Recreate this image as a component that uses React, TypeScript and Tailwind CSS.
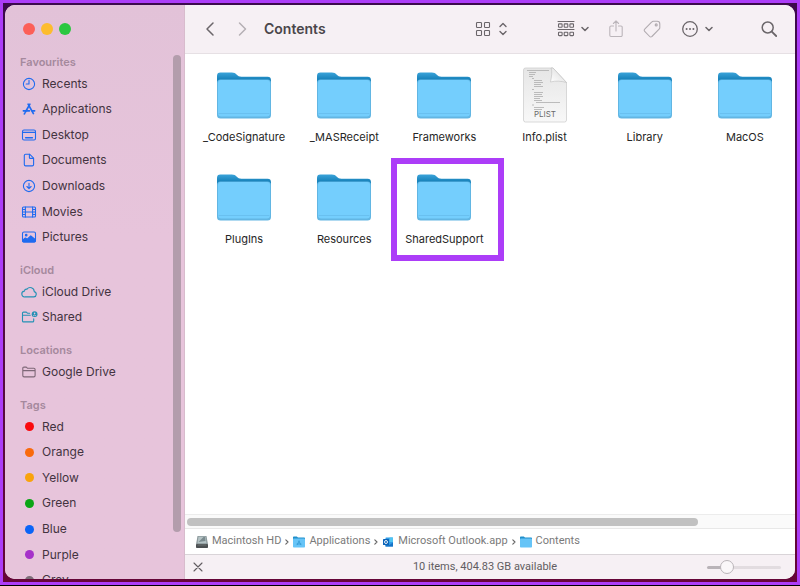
import React, { useState } from "react";
import type { ReactNode } from "react";

const Icon = ({
  children,
  className = "h-4 w-[18px]",
  box = "0 0 18 16",
}: {
  children: ReactNode;
  className?: string;
  box?: string;
}) => (
  <svg
    viewBox={box}
    className={`shrink-0 ${className}`}
    fill="none"
    stroke="currentColor"
    strokeWidth="1.1"
    strokeLinecap="round"
    strokeLinejoin="round"
    aria-hidden="true"
  >
    {children}
  </svg>
);

const favourites = [
  {
    name: "Recents",
    icon: (
      <>
        <circle cx="9" cy="8" r="5.6" />
        <path d="M9 4.4V8H6.2" />
      </>
    ),
  },
  {
    name: "Applications",
    icon: (
      <>
        <path d="M9.9 3.2 5.4 11M8.1 3.2l5.3 9.4" strokeWidth="1.7" />
        <path d="M3.4 9.8h6M12.2 9.8h2.4M4.8 12.2l-.4.7" strokeWidth="1.7" />
      </>
    ),
  },
  {
    name: "Desktop",
    icon: (
      <>
        <rect x="2.5" y="3" width="13" height="10" rx="1.5" />
        <path d="M2.8 5.4h12.4" />
        <path d="M5.6 10.8h6.8" strokeWidth="1.5" />
      </>
    ),
  },
  {
    name: "Documents",
    icon: (
      <>
        <path d="M5.6 2.2h4l4 4v6.4a1.3 1.3 0 0 1-1.3 1.3H5.6a1.3 1.3 0 0 1-1.3-1.3V3.5a1.3 1.3 0 0 1 1.3-1.3Z" />
        <path d="M9.4 2.4v3a1 1 0 0 0 1 1h3" />
      </>
    ),
  },
  {
    name: "Downloads",
    icon: (
      <>
        <circle cx="9" cy="8" r="5.6" />
        <path d="M9 5.2v5.2M6.9 8.5 9 10.6l2.1-2.1" />
      </>
    ),
  },
  {
    name: "Movies",
    icon: (
      <>
        <rect x="2.5" y="3" width="13" height="10" rx="1" />
        <path d="M5.4 3v10M12.6 3v10M5.4 8h7.2M2.6 5.5h2.8M2.6 8h2.8M2.6 10.5h2.8M12.6 5.5h2.8M12.6 8h2.8M12.6 10.5h2.8" />
      </>
    ),
  },
  {
    name: "Pictures",
    icon: (
      <>
        <rect x="2.5" y="3" width="13" height="10" rx="1.5" />
        <path
          d="M2.6 11.2 5.4 9l1.8 1.2 3.6-3.4 4.6 3.8v1.2a1.2 1.2 0 0 1-1.2 1.2H3.8a1.2 1.2 0 0 1-1.2-1.2Z"
          fill="currentColor"
        />
        <circle cx="6.2" cy="6.2" r="0.8" fill="currentColor" />
      </>
    ),
  },
];

const icloud = [
  {
    name: "iCloud Drive",
    icon: (
      <path d="M5 12.9a2.9 2.9 0 0 1-.6-5.8 2.3 2.3 0 0 1 2.6-1.9 4 4 0 0 1 7.2 2.4 2.7 2.7 0 0 1-.3 5.3Z" />
    ),
  },
  {
    name: "Shared",
    icon: (
      <>
        <path d="M9.6 4.2H7.4L6.3 3.1H3.5a1 1 0 0 0-1 1v7.8a1 1 0 0 0 1 1h9.2a1 1 0 0 0 1-1v-2M2.6 6.3h7.6" />
        <circle cx="14.6" cy="5.2" r="2.9" fill="currentColor" stroke="none" />
        <circle cx="14.6" cy="4.4" r="0.8" fill="#e6c4db" stroke="none" />
        <path d="M13.2 6.8q1.4-1.6 2.8 0" stroke="#e6c4db" strokeWidth="0.8" />
      </>
    ),
  },
];

const locations = [
  {
    name: "Google Drive",
    icon: (
      <path d="M2.8 11.6V4.2a1.1 1.1 0 0 1 1.1-1.1h2.4l1.3 1.2h6.2a1.3 1.3 0 0 1 1.3 1.3v6a1.3 1.3 0 0 1-1.3 1.3H4.1a1.3 1.3 0 0 1-1.3-1.3ZM2.8 6.6h12.3" />
    ),
  },
];

const tags = [
  { name: "Red", color: "bg-[#fa0a0e]" },
  { name: "Orange", color: "bg-[#f96a0c]" },
  { name: "Yellow", color: "bg-[#f9a30c]" },
  { name: "Green", color: "bg-[#0ba516]" },
  { name: "Blue", color: "bg-[#0a64f7]" },
  { name: "Purple", color: "bg-[#a631c9]" },
  { name: "Grey", color: "bg-[#7c6d78]" },
];

const files = [
  "_CodeSignature",
  "_MASReceipt",
  "Frameworks",
  "Info.plist",
  "Library",
  "MacOS",
  "PlugIns",
  "Resources",
  "SharedSupport",
];

const Folder = () => (
  <svg viewBox="0 0 56 56" className="size-14" aria-hidden="true">
    <defs>
      <linearGradient id="folder-back" x1="0" y1="0" x2="0" y2="1">
        <stop offset="0" stopColor="#3aa3d9" />
        <stop offset="0.25" stopColor="#1b85bd" />
      </linearGradient>
    </defs>
    <path
      d="M1 9a3.4 3.4 0 0 1 3.4-3.4h11.4c2.4 0 3.6.9 5 2.2 1.2 1.1 2.4 2 4.6 2h26.2A3.4 3.4 0 0 1 55 13.2V30H1Z"
      fill="url(#folder-back)"
    />
    <rect x="1" y="12.5" width="54" height="39" rx="3.5" fill="#62b6e3" />
    <rect x="2" y="13" width="52" height="36.5" rx="3" fill="#74cefd" />
    <path d="M2.5 46.5h51" stroke="#66bdec" strokeWidth="0.8" />
  </svg>
);

const PlistFile = () => (
  <svg viewBox="0 0 56 56" className="size-14" aria-hidden="true">
    <defs>
      <linearGradient id="page" x1="0" y1="0" x2="0" y2="1">
        <stop offset="0" stopColor="#e6e6e6" />
        <stop offset="1" stopColor="#f8f8f8" />
      </linearGradient>
      <linearGradient id="curl" x1="0" y1="1" x2="1" y2="0">
        <stop offset="0" stopColor="#ffffff" />
        <stop offset="1" stopColor="#d8d8d8" />
      </linearGradient>
    </defs>
    <path
      d="M8.5 1H36L49.5 15.5V53a2 2 0 0 1-2 2h-39a2 2 0 0 1-2-2V3a2 2 0 0 1 2-2Z"
      fill="url(#page)"
      stroke="#cfcfcf"
      strokeWidth="0.8"
    />
    <path
      d="M10 3.5h22M12 5.5h7M12 7.5h6M12 9.5h4M15 11.5h2M17 13.5h8M17 15.5h9M17 17.5h7M17 19.5h9M15 22.5h2M17 25.5h9M17 27.5h8M17 29.5h9M17 31.5h6M17 33.5h8M19 35.5h24M15 38h2M17 40.5h10M17 42.5h8"
      stroke="#adadad"
      strokeWidth="0.8"
    />
    <path
      d="M34 1c1.5 3 .5 9-.5 14 5-1.5 11-1 16 .5L36 1Z"
      fill="url(#curl)"
      stroke="#bdbdbd"
      strokeWidth="0.6"
    />
    <text
      x="28"
      y="50"
      textAnchor="middle"
      fontSize="8"
      fill="#6a6a6a"
      className="font-['Inter',sans-serif]"
    >
      PLIST
    </text>
  </svg>
);

const SmallFolder = ({ apps = false }: { apps?: boolean }) => (
  <svg viewBox="0 0 12 12" className="size-3 shrink-0" aria-hidden="true">
    <path d="M0 1.3Q0 .5.8.5h3L5 1.5h6.2q.8 0 .8.8V8H0Z" fill="#1f8fcb" />
    <rect y="2.5" width="12" height="9" rx="0.8" fill="#66c4f7" />
    {apps && (
      <path
        d="m6.3 4.7-2.3 4.4M5.7 4.7 8 9.1M3.7 8h4.6"
        stroke="#2b93cf"
        strokeWidth="0.7"
      />
    )}
  </svg>
);

const Drive = () => (
  <svg viewBox="0 0 12 12" className="size-3 shrink-0" aria-hidden="true">
    <path d="M1.5 0h9L12 8.5H0Z" fill="#8d9a9d" />
    <path d="M2.5.8h7l1 6.5h-9Z" fill="#b5c3c5" />
    <path d="m2.5 6 5-5h1.5l.5 4Z" fill="#7b8b8f" />
    <rect y="8" width="12" height="4" rx="0.8" fill="#4c5052" />
    <path d="M1.5 9h9" stroke="#83898b" strokeWidth="0.6" />
  </svg>
);

const Outlook = () => (
  <svg viewBox="0 0 12 12" className="size-3 shrink-0" aria-hidden="true">
    <rect x="3.5" y="1.5" width="7.5" height="9" rx="0.6" fill="#2f9be6" />
    <path d="M7.5 1.5H11V6H7.5Z" fill="#50c4f2" />
    <path d="M3.5 7 7.5 9 11 6.5v4H3.5Z" fill="#1673c6" />
    <rect x="1" y="3" width="6" height="6" rx="0.6" fill="#0b63b8" />
    <circle cx="4" cy="6" r="1.5" fill="none" stroke="#fff" strokeWidth="0.9" />
  </svg>
);

const path = [
  { name: "Macintosh HD", icon: <Drive /> },
  { name: "Applications", icon: <SmallFolder apps /> },
  { name: "Microsoft Outlook.app", icon: <Outlook /> },
  { name: "Contents", icon: <SmallFolder /> },
];

const Section = ({
  title,
  children,
  className = "",
}: {
  title: string;
  children: ReactNode;
  className?: string;
}) => (
  <section>
    <h2 className="text-[11px] leading-[18px] font-semibold text-[#a5899d]">
      {title}
    </h2>
    <ul className={`grid auto-rows-fr ${className}`}>{children}</ul>
  </section>
);

const Row = ({ name, children }: { name: string; children: ReactNode }) => (
  <li className="flex">
    <a href="#" className="flex items-center gap-1 text-xs text-[#43333f]">
      <span className="flex w-[18px] justify-center">{children}</span>
      {name}
    </a>
  </li>
);

const Down = () => (
  <Icon box="0 0 8 8" className="size-2">
    <path d="m1 2.5 3 3 3-3" strokeWidth="1.5" />
  </Icon>
);

const App = () => {
  const [zoom, setZoom] = useState(22);

  return (
    <div className="h-screen bg-black pb-px font-['Inter',sans-serif]">
      <div className="h-full border-[3px] border-[#ac3df8] bg-linear-to-b from-[#3c0a4d] to-[#650538] p-0.5 pb-[3px]">
        <div className="flex h-full overflow-hidden rounded-[10px] bg-white">
          {/* Sidebar */}
          <aside className="flex w-[180px] shrink-0 flex-col border-r border-[#d8bccd] bg-linear-to-b from-[#e2c2d8] to-[#e7c4db] to-40%">
            <div className="flex h-12 shrink-0 items-center gap-1.5 pl-[18px]">
              <button aria-label="Close" className="size-3 rounded-full bg-[#fc5f58]" />
              <button aria-label="Minimise" className="size-3 rounded-full bg-[#fdbc2e]" />
              <button aria-label="Zoom" className="size-3 rounded-full bg-[#2bc740]" />
            </div>
            <div className="flex min-h-0 flex-1">
              <nav className="flex flex-1 flex-col gap-[11px] overflow-hidden pl-[15px]">
                <Section title="Favourites" className="h-[179px]">
                  {favourites.map((item) => (
                    <Row key={item.name} name={item.name}>
                      <Icon className="h-4 w-[18px] text-[#1f6bf0]">{item.icon}</Icon>
                    </Row>
                  ))}
                </Section>
                <Section title="iCloud" className="h-[51px]">
                  {icloud.map((item) => (
                    <Row key={item.name} name={item.name}>
                      <Icon className="h-4 w-[18px] text-[#2391b5]">{item.icon}</Icon>
                    </Row>
                  ))}
                </Section>
                <Section title="Locations" className="h-[26px]">
                  {locations.map((item) => (
                    <Row key={item.name} name={item.name}>
                      <Icon className="h-4 w-[18px] text-[#7d6777]">{item.icon}</Icon>
                    </Row>
                  ))}
                </Section>
                <Section title="Tags" className="h-[179px]">
                  {tags.map((tag) => (
                    <Row key={tag.name} name={tag.name}>
                      <span className={`size-[9px] rounded-full ${tag.color}`} />
                    </Row>
                  ))}
                </Section>
              </nav>
              <div className="mr-[3px] w-2 pt-0.5">
                <div className="h-[91%] rounded-full bg-[#b39dac]" />
              </div>
            </div>
          </aside>

          <main className="flex min-w-0 flex-1 flex-col">
            {/* Toolbar */}
            <header className="flex h-[49px] shrink-0 items-center border-b border-[#e6e0e4] bg-[#f6f0f4] pr-4 pl-[15px] text-[#6b666a]">
              <div className="flex items-center gap-3">
                <button aria-label="Back">
                  <Icon box="0 0 20 20" className="size-5">
                    <path d="m13 4-6 6 6 6" strokeWidth="1.5" />
                  </Icon>
                </button>
                <button aria-label="Forward" className="text-[#b5afb4]">
                  <Icon box="0 0 20 20" className="size-5">
                    <path d="m7.5 4 6 6-6 6" strokeWidth="1.5" />
                  </Icon>
                </button>
                <h1 className="text-sm font-semibold text-[#4a464a]">Contents</h1>
              </div>
              <div className="ml-auto flex items-center gap-5">
                <button aria-label="View as icons" className="mr-[30px] flex items-center gap-2">
                  <Icon box="0 0 16 16" className="size-4">
                    <rect x="1.5" y="1.5" width="5" height="5" rx="0.8" />
                    <rect x="9.5" y="1.5" width="5" height="5" rx="0.8" />
                    <rect x="1.5" y="9.5" width="5" height="5" rx="0.8" />
                    <rect x="9.5" y="9.5" width="5" height="5" rx="0.8" />
                  </Icon>
                  <Icon box="0 0 8 14" className="h-3.5 w-2">
                    <path d="m1 4.5 3-3 3 3M1 9.5l3 3 3-3" strokeWidth="1.4" />
                  </Icon>
                </button>
                <button aria-label="Group" className="flex items-center gap-1.5">
                  <Icon box="0 0 18 18" className="size-[18px]">
                    <path d="M1 1.5h16M1 9.5h16" />
                    <rect x="1.5" y="3.9" width="3.6" height="3.4" rx="0.6" />
                    <rect x="7.2" y="3.9" width="3.6" height="3.4" rx="0.6" />
                    <rect x="12.9" y="3.9" width="3.6" height="3.4" rx="0.6" />
                    <rect x="1.5" y="12.2" width="3.6" height="3.4" rx="0.6" />
                    <rect x="7.2" y="12.2" width="3.6" height="3.4" rx="0.6" />
                    <rect x="12.9" y="12.2" width="3.6" height="3.4" rx="0.6" />
                  </Icon>
                  <Down />
                </button>
                <button aria-label="Share" className="text-[#bbb5ba]">
                  <Icon box="0 0 14 18" className="h-[18px] w-3.5">
                    <path d="M4.5 6H2a1.2 1.2 0 0 0-1.2 1.2v8.1A1.2 1.2 0 0 0 2 16.5h10a1.2 1.2 0 0 0 1.2-1.2V7.2A1.2 1.2 0 0 0 12 6H9.5M7 11V1M4.4 3.5 7 .9l2.6 2.6" />
                  </Icon>
                </button>
                <button aria-label="Edit tags" className="text-[#b0aaaf]">
                  <Icon box="0 0 18 18" className="size-[18px]">
                    <path d="M10.4 1.3h3.8a2.6 2.6 0 0 1 2.6 2.6v3.5a2.5 2.5 0 0 1-.7 1.8l-7.2 7.3a1.5 1.5 0 0 1-2.2 0l-5-5.2a1.5 1.5 0 0 1 0-2.2l6.9-7a2.5 2.5 0 0 1 1.8-.8Z" />
                    <circle cx="13.2" cy="4.9" r="1" />
                  </Icon>
                </button>
                <button aria-label="More actions" className="flex items-center gap-1.5">
                  <Icon box="0 0 18 18" className="size-[18px]">
                    <circle cx="9" cy="9" r="7.3" strokeWidth="1.3" />
                    <path d="M5.6 9h.01M9 9h.01M12.4 9h.01" strokeWidth="2" />
                  </Icon>
                  <Down />
                </button>
                <button aria-label="Search" className="ml-[26px]">
                  <Icon box="0 0 20 20" className="size-5">
                    <circle cx="8.7" cy="8.5" r="5.5" strokeWidth="1.5" />
                    <path d="m12.8 12.6 4.4 4.4" strokeWidth="1.8" />
                  </Icon>
                </button>
              </div>
            </header>

            {/* Files */}
            <div className="grid min-h-0 flex-1 auto-rows-[102px] grid-cols-6 overflow-hidden pt-[13px] pl-[9px]">
              {files.map((file) => (
                <div key={file} className="relative">
                  {file === "SharedSupport" && (
                    <div className="absolute -top-[11px] -left-[3px] h-[103px] w-[113px] border-[6px] border-[#ac3df8]" />
                  )}
                  <button className="flex w-full flex-col items-center gap-1.5 text-[11px] leading-4 text-[#262626]">
                    {file.endsWith(".plist") ? <PlistFile /> : <Folder />}
                    {file}
                  </button>
                </div>
              ))}
            </div>

            {/* Horizontal scrollbar */}
            <div className="flex h-[14px] shrink-0 items-center border-t border-[#ececec] bg-[#fafafa] pl-0.5">
              <div className="h-2 w-[84%] rounded-full bg-[#c1c1c1]" />
            </div>

            {/* Path bar */}
            <nav className="flex h-[26px] shrink-0 items-center border-t border-[#e8e8e8] pl-[11px] font-['Roboto',sans-serif] text-[11px] text-[#7a7a7a]">
              {path.map((part, i) => (
                <React.Fragment key={part.name}>
                  {i > 0 && (
                    <Icon box="0 0 4 8" className="mx-1 h-2 w-1 text-[#666666]">
                      <path d="m.8 1.8 2.2 2.2-2.2 2.2" />
                    </Icon>
                  )}
                  <a href="#" className="flex items-center gap-1">
                    {part.icon}
                    {part.name}
                  </a>
                </React.Fragment>
              ))}
            </nav>

            {/* Status bar */}
            <footer className="flex h-[25px] shrink-0 items-center border-t border-[#d9d4d8] bg-[#f6f0f4] pr-3.5 pl-2 font-['Roboto',sans-serif] text-[11px] text-[#625d61]">
              <button aria-label="Cancel">
                <Icon box="0 0 10 10" className="size-2.5">
                  <path d="m1 1 8 8M9 1 1 9" />
                </Icon>
              </button>
              <p className="flex-1 pl-[60px] text-center">10 items, 404.83 GB available</p>
              <input
                type="range"
                aria-label="Icon size"
                value={zoom}
                onChange={(e) => setZoom(Number(e.target.value))}
                className="h-[3px] w-[74px] appearance-none rounded-full bg-linear-to-r from-[#b9b3b8] from-25% to-[#e2dce0] to-25% [&::-webkit-slider-thumb]:size-3.5 [&::-webkit-slider-thumb]:appearance-none [&::-webkit-slider-thumb]:rounded-full [&::-webkit-slider-thumb]:border [&::-webkit-slider-thumb]:border-[#bab5b9] [&::-webkit-slider-thumb]:bg-[#faf7f9]"
              />
            </footer>
          </main>
        </div>
      </div>
    </div>
  );
};

export default App;
